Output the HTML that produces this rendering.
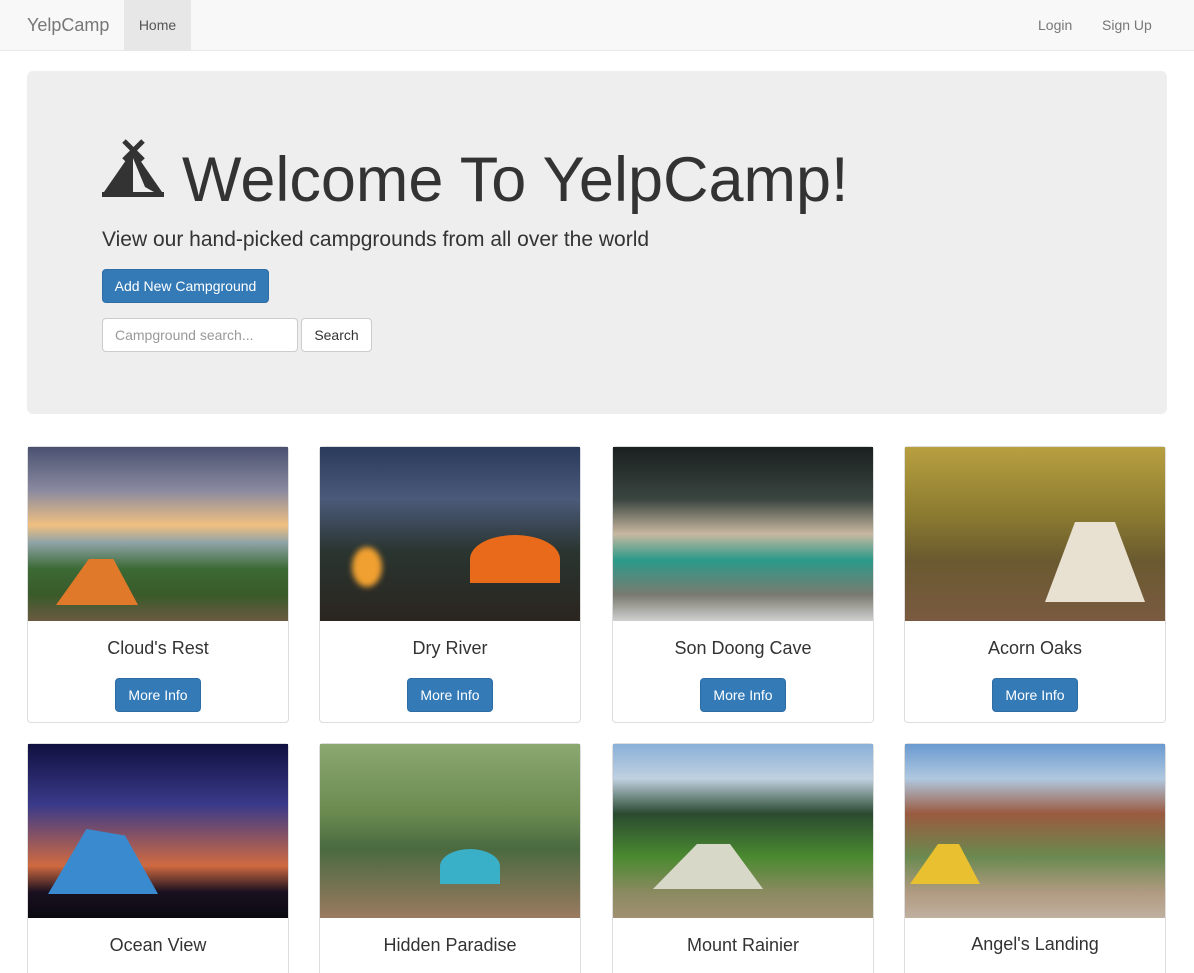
<!DOCTYPE html>
<html style="width:1194px;height:973px;overflow:hidden"><head><style>
*{box-sizing:border-box;margin:0;padding:0}
body{font-family:"Liberation Sans",sans-serif;color:#333;background:#fff;width:1194px;height:973px;overflow:hidden;position:relative;font-size:14px}
.nav{position:absolute;left:0;top:0;width:1194px;height:51px;background:#f8f8f8;border-bottom:1px solid #e7e7e7}
.nav a{position:absolute;top:0;height:50px;line-height:50px;color:#777;text-decoration:none}
.jumbo{position:absolute;left:27px;top:71px;width:1140px;height:343px;background:#eee;border-radius:6px}
h1{position:absolute;left:155px;top:69px;font-size:63px;font-weight:normal;line-height:80px;white-space:nowrap}
.sub{position:absolute;left:75px;top:157px;font-size:21px;font-weight:300}
.btnp{position:absolute;background:#337ab7;border:1px solid #2e6da4;color:#fff;border-radius:4px;text-align:center;font-size:14px}
.inp{position:absolute;left:75px;top:247px;width:196px;height:34px;border:1px solid #ccc;border-radius:4px;background:#fff;color:#999;padding:8px 12px;font-size:14px;line-height:16px}
.sbtn{position:absolute;left:274px;top:247px;width:71px;height:34px;border:1px solid #ccc;border-radius:4px;background:#fff;line-height:32px;text-align:center}
.card{position:absolute;width:262px;border:1px solid #ddd;border-radius:4px;background:#fff;height:277px}
.img{position:absolute;left:0;top:0;width:260px;height:174px}
.t{position:absolute;top:191px;width:100%;text-align:center;font-size:18px}
.card .btnp{left:87px;top:231px;width:86px;height:34px;line-height:32px}
</style></head><body>
<div class="nav">
<a style="left:27px;font-size:18px">YelpCamp</a>
<a style="left:124px;width:67px;background:#e7e7e7;color:#555;text-align:center">Home</a>
<a style="left:1038px">Login</a>
<a style="left:1102px">Sign Up</a>
</div>
<div class="jumbo">
<svg style="position:absolute;left:75px;top:68px" width="63" height="58" viewBox="0 0 63 58">
<path d="M22 2 L41 21 M41 2 L22 21" stroke="#333" stroke-width="5"/>
<path d="M31 11 L2 53 L0 53 L0 58 L62 58 L62 53 L60 53 Z M31 19 L31 53 L52 53 L43 48 Z" fill="#333" fill-rule="evenodd"/>
</svg>
<h1>Welcome To YelpCamp!</h1>
<div class="sub">View our hand-picked campgrounds from all over the world</div>
<div class="btnp" style="left:75px;top:198px;width:167px;height:34px;line-height:32px">Add New Campground</div>
<div class="inp">Campground search...</div>
<div class="sbtn">Search</div>
</div>

<div class="card" style="left:27px;top:446px"><div class="img" style="background:linear-gradient(180deg,#4a5170 0%,#8a8aa0 25%,#f0c080 45%,#8fa3a8 55%,#3b6a35 70%,#3a5a2a 85%,#6b5a40 100%)"><div style="position:absolute;left:28px;top:112px;width:82px;height:46px;background:#e07a2a;clip-path:polygon(40% 0,0 100%,100% 100%,70% 0)"></div></div><div class="t">Cloud's Rest</div><div class="btnp">More Info</div></div>
<div class="card" style="left:319px;top:446px"><div class="img" style="background:linear-gradient(180deg,#2a3a5a 0%,#4b5a7a 30%,#2a3530 60%,#2b2520 100%)"><div style="position:absolute;left:150px;top:88px;width:90px;height:48px;background:#e86a1a;border-radius:50% 50% 0 0"></div><div style="position:absolute;left:32px;top:100px;width:30px;height:40px;background:#f0a030;border-radius:50%;filter:blur(3px)"></div></div><div class="t">Dry River</div><div class="btnp">More Info</div></div>
<div class="card" style="left:612px;top:446px"><div class="img" style="background:linear-gradient(180deg,#1a2020 0%,#3a4540 30%,#c8b8a0 50%,#2a9a8a 65%,#7a7a70 85%,#d0d0d0 100%)"></div><div class="t">Son Doong Cave</div><div class="btnp">More Info</div></div>
<div class="card" style="left:904px;top:446px"><div class="img" style="background:linear-gradient(180deg,#b8a040 0%,#8a7a30 40%,#6a5a30 65%,#7a5a40 100%)"><div style="position:absolute;left:140px;top:75px;width:100px;height:80px;background:#e8e0d0;clip-path:polygon(30% 0,0 100%,100% 100%,70% 0)"></div></div><div class="t">Acorn Oaks</div><div class="btnp">More Info</div></div>

<div class="card" style="left:27px;top:743px;height:240px"><div class="img" style="background:linear-gradient(180deg,#101040 0%,#3a3a8a 35%,#d06a40 70%,#1a1020 85%,#0a0a10 100%)"><div style="position:absolute;left:20px;top:85px;width:110px;height:65px;background:#3a8ad0;clip-path:polygon(35% 0,0 100%,100% 100%,70% 10%)"></div></div><div class="t">Ocean View</div></div>
<div class="card" style="left:319px;top:743px;height:240px"><div class="img" style="background:linear-gradient(180deg,#8aa870 0%,#6a8a50 40%,#4a6a40 60%,#9a7a60 100%)"><div style="position:absolute;left:120px;top:105px;width:60px;height:35px;background:#3ab0c8;border-radius:50% 50% 0 0"></div></div><div class="t">Hidden Paradise</div></div>
<div class="card" style="left:612px;top:743px;height:240px"><div class="img" style="background:linear-gradient(180deg,#8ab0d8 0%,#c0d0e0 20%,#2a4a30 40%,#4a8a30 65%,#8a8a60 85%,#a09070 100%)"><div style="position:absolute;left:40px;top:100px;width:110px;height:45px;background:#d8d8c8;clip-path:polygon(40% 0,0 100%,100% 100%,70% 0)"></div></div><div class="t">Mount Rainier</div></div>
<div class="card" style="left:904px;top:743px;height:240px"><div class="img" style="background:linear-gradient(180deg,#6a9ad0 0%,#b0c8e0 20%,#9a5a40 40%,#6a8a50 65%,#b09a80 85%,#c0b0a0 100%)"><div style="position:absolute;left:5px;top:100px;width:70px;height:40px;background:#e8c030;clip-path:polygon(40% 0,0 100%,100% 100%,70% 0)"></div></div><div class="t" style="top:190px">Angel's Landing</div></div>
</body></html>
